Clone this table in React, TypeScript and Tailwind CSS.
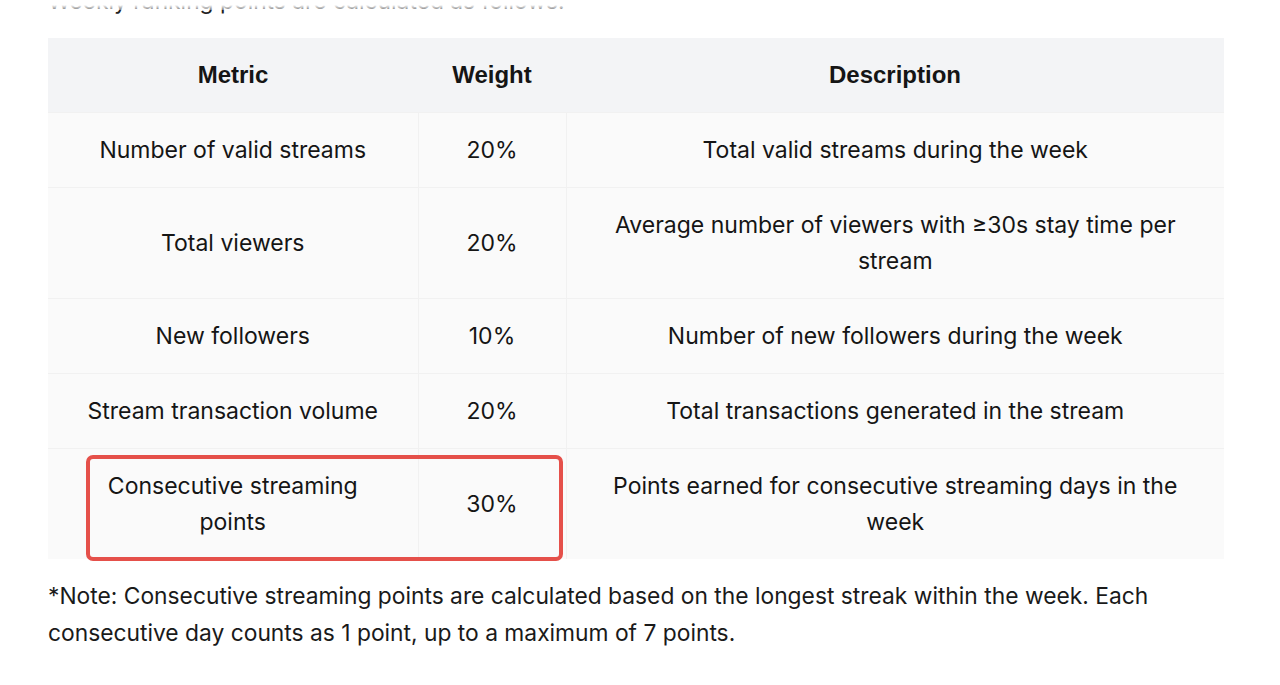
import React from 'react';

const rows = [
  { metric: 'Number of valid streams', weight: '20%', description: 'Total valid streams during the week' },
  { metric: 'Total viewers', weight: '20%', description: 'Average number of viewers with ≥30s stay time per stream' },
  { metric: 'New followers', weight: '10%', description: 'Number of new followers during the week' },
  { metric: 'Stream transaction volume', weight: '20%', description: 'Total transactions generated in the stream' },
  { metric: 'Consecutive streaming points', weight: '30%', description: 'Points earned for consecutive streaming days in the week' },
];

const headFont = { fontFamily: '"Liberation Sans", Arial, sans-serif', fontSize: 24 };

const App = () => {
  return (
    <div className="relative w-[1280px] h-[685px] overflow-hidden bg-white text-[#151515]" style={{ fontFamily: 'Inter, "Noto Sans", sans-serif' }}>
      {/* fade over the line scrolled above the fold */}
      <div className="absolute left-0 top-0 w-full h-[10px] bg-gradient-to-b from-white via-white to-white/40 z-10 pointer-events-none" />
      <div className="pl-12 pr-[56px]">
        <p className="text-[22.8px] leading-[36px] -mt-[17px] text-[#222]">Weekly ranking points are calculated as follows:</p>

        <div className="relative mt-[19px]">
          <table className="w-full border-collapse text-[23px] leading-[36px] text-center">
            <thead>
              <tr className="bg-[#f3f4f6]">
                <th className="w-[370px] py-[19px] font-bold" style={headFont}>Metric</th>
                <th className="w-[148px] py-[19px] font-bold" style={headFont}>Weight</th>
                <th className="py-[19px] font-bold" style={headFont}>Description</th>
              </tr>
            </thead>
            <tbody>
              {rows.map((r) => (
                <tr key={r.metric} className="bg-[#fafafa] border-t border-[#f1f1f1]">
                  <td className="px-[36px] py-[19px] border-r border-[#f1f1f1]">{r.metric}</td>
                  <td className="px-4 py-[19px] border-r border-[#f1f1f1]">{r.weight}</td>
                  <td className="px-[40px] py-[19px]">{r.description}</td>
                </tr>
              ))}
            </tbody>
          </table>
          {/* highlight box */}
          <div className="absolute left-[38px] top-[417px] w-[477px] h-[106px] border-[4px] border-[#e5504a] rounded-[7px] pointer-events-none" />
        </div>

        <p className="mt-[18px] text-[22.8px] leading-[37px] text-[#1a1a1a]">
          *Note: Consecutive streaming points are calculated based on the longest streak within the week. Each consecutive day counts as 1 point, up to a maximum of 7 points.
        </p>
      </div>
    </div>
  );
};

export default App;
